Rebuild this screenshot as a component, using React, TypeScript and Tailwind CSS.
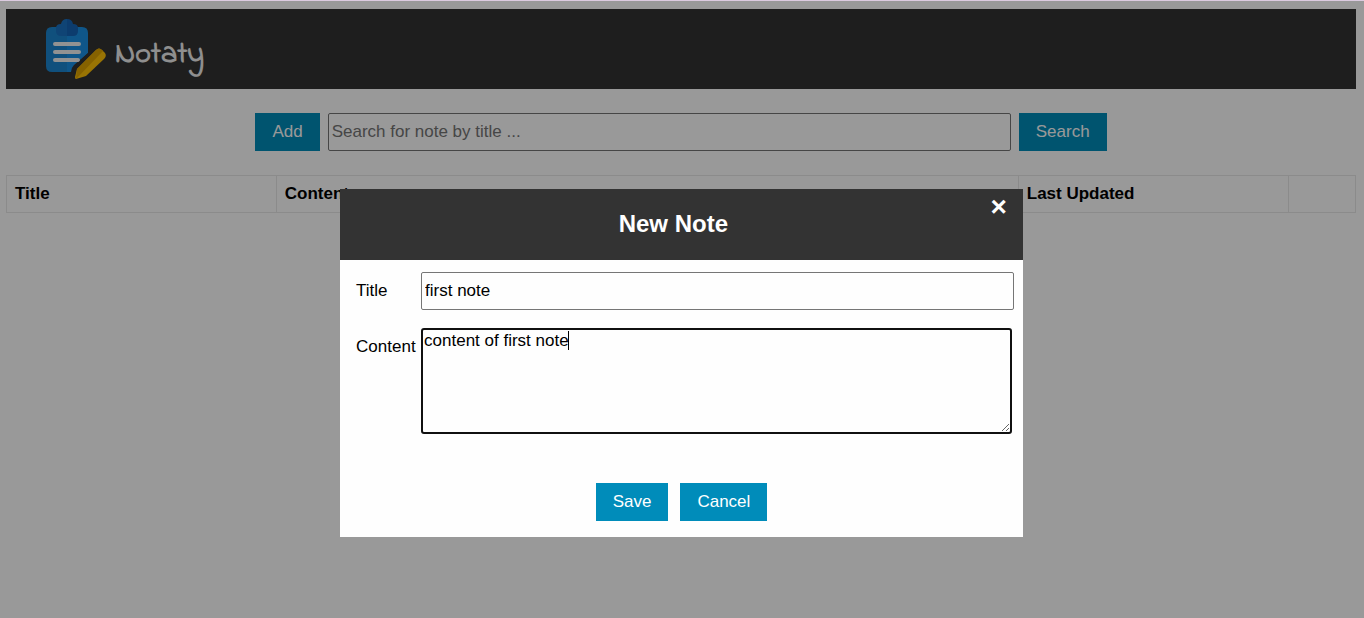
import React, { useEffect, useRef, useState } from "react";

const buttonClass =
  "h-[38px] shrink-0 cursor-pointer bg-[#008cba] px-[17px] pb-px text-[17px] text-white";

function LogoIcon() {
  return (
    <svg viewBox="0 0 62 62" className="h-[62px] w-[62px]" aria-hidden="true">
      <path d="M7 8H22V53H7Q1 53 1 47V14Q1 8 7 8Z" fill="#1c86d0" />
      <path d="M22 8H37Q43 8 43 14V34L29 46Q26 49 26 53H22Z" fill="#1a90e4" />
      <path d="M22 0Q17 0 16 5Q11 5 11 9V12Q11 17 16 17H22Z" fill="#1a72c4" />
      <path d="M22 0Q27 0 28 5Q33 5 33 9V12Q33 17 28 17H22Z" fill="#1565b8" />
      <path d="M10 25H34M10 33H34M10 41H33" stroke="#f4f4f4" strokeWidth="4" strokeLinecap="round" />
      <path
        d="M31 60Q30 60 30 58L32 50L51 31Q54 28 57 31L60 34Q62 37 59 40L41 57Z"
        fill="#333"
        stroke="#333"
        strokeWidth="7"
      />
      <path d="M31 60Q30 60 30 58L32 50L51 31Q54 28 57 31L60 34Q62 37 59 40L41 57Z" fill="#ffc107" />
      <path d="M31 60L32 50L51 31Q54 28 57 31L58 32Z" fill="#dfa400" />
    </svg>
  );
}

export default function App() {
  const [title, setTitle] = useState("first note");
  const [content, setContent] = useState("content of first note");
  const contentRef = useRef<HTMLTextAreaElement>(null);

  useEffect(() => {
    const field = contentRef.current;
    if (field) {
      field.focus();
      field.setSelectionRange(field.value.length, field.value.length);
    }
  }, []);

  return (
    <div className="min-h-screen bg-white font-['Liberation_Sans',Arial,sans-serif] text-[17px] leading-6 text-black">
      <div className="pt-[9px] pr-2 pl-1.5">
        <header className="flex h-20 items-start bg-[#333] pt-2.5 pl-[39px]">
          <LogoIcon />
          <span className="ml-2 pt-4 font-['Indie_Flower','Comic_Neue',cursive] text-[30px] leading-10 font-bold text-[#eee]">
            Notaty
          </span>
        </header>
        <div className="mt-6 flex justify-center gap-2">
          <button type="button" className={buttonClass}>Add</button>
          <input
            type="text"
            aria-label="Search for note by title"
            placeholder="Search for note by title ..."
            className="h-[38px] w-[50.6%] rounded-xs border border-[#767676] px-[3px] pb-px placeholder:text-[#757575]"
          />
          <button type="button" className={buttonClass}>Search</button>
        </div>
        <table className="mt-6 w-full table-fixed border-collapse text-left">
          <thead>
            <tr className="h-[37px]">
              <th className="w-[20%] border border-[#e8e8e8] px-2 pb-px">Title</th>
              <th className="w-[55%] border border-[#e8e8e8] px-2 pb-px">Content</th>
              <th className="w-[20%] border border-[#e8e8e8] px-2 pb-px">Last Updated</th>
              <th className="w-[5%] border border-[#e8e8e8]" />
            </tr>
          </thead>
        </table>
      </div>

      <div className="fixed inset-0 border-t border-[#dccbe0] bg-black/40 pt-[188px] pr-px">
        <div role="dialog" aria-labelledby="dialog-title" className="mx-auto w-[50.1%] bg-[#fefefe]">
          <div className="flex h-[71px] items-start bg-[#333] px-4 text-white">
            <h2 id="dialog-title" className="flex-1 pt-[21px] text-center text-2xl leading-7 font-bold">
              New Note
            </h2>
            <button type="button" aria-label="Close" className="cursor-pointer text-[28px] leading-9 font-bold">
              ×
            </button>
          </div>
          <form className="pb-4" onSubmit={(event) => event.preventDefault()}>
            <div className="grid grid-cols-[65px_1fr] gap-y-[18px] pt-3 pr-[9px] pl-4">
              <label htmlFor="note-title" className="pt-[7px]">Title</label>
              <input
                id="note-title"
                type="text"
                value={title}
                onChange={(event) => setTitle(event.target.value)}
                className="h-[38px] w-full rounded-xs border border-[#767676] px-[3px] pb-px"
              />
              <label htmlFor="note-content" className="pt-[7px]">Content</label>
              <div className="relative pr-0.5">
                <textarea
                  id="note-content"
                  ref={contentRef}
                  value={content}
                  onChange={(event) => setContent(event.target.value)}
                  className="block h-[106px] w-full resize rounded-[3px] border-2 border-[#101010] px-px pt-px leading-5 caret-transparent outline-none"
                />
                <span
                  aria-hidden="true"
                  className="pointer-events-none absolute top-[3px] left-[147px] h-[19px] w-px bg-black"
                />
              </div>
            </div>
            <div className="mt-[49px] flex justify-center gap-3">
              <button type="submit" className={buttonClass}>Save</button>
              <button type="button" className={buttonClass}>Cancel</button>
            </div>
          </form>
        </div>
      </div>
    </div>
  );
}
